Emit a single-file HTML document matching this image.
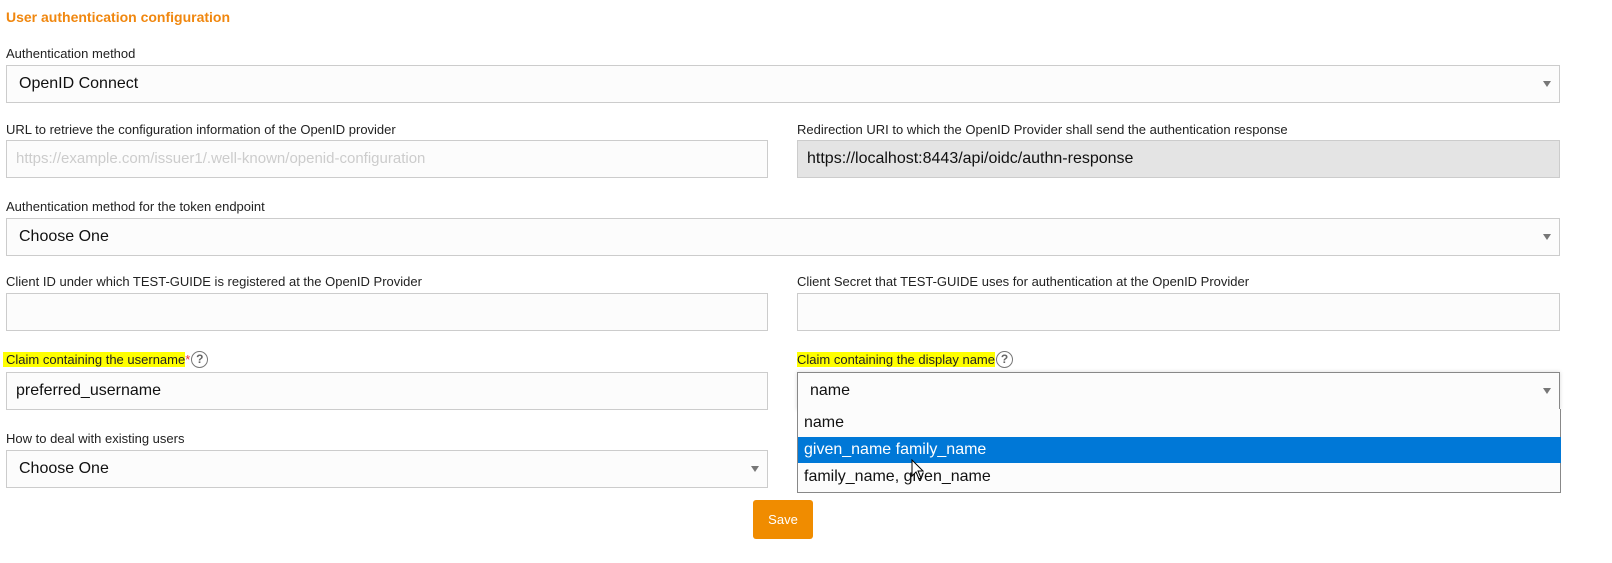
<!DOCTYPE html>
<html><head><meta charset="utf-8"><style>
*{box-sizing:border-box;margin:0;padding:0}
body{width:1612px;height:563px;background:#fff;font-family:"Liberation Sans",Arial,sans-serif;position:relative;overflow:hidden;color:#222}
.t{position:absolute;left:6px;top:9px;font-size:14px;font-weight:bold;color:#f0870f}
.l{position:absolute;font-size:13px;color:#222;white-space:nowrap;line-height:15px}
.b{position:absolute;border:1px solid #ccc;background:#fcfcfc;font-size:16px;padding-left:12px;line-height:36px;color:#111}
.arr{position:absolute;right:8px;top:15px;width:0;height:0;border-left:4px solid transparent;border-right:4px solid transparent;border-top:6px solid #777}
.hl{background:#ffff00;display:inline-block;line-height:15px;vertical-align:top}
.q{display:inline-block;width:17px;height:17px;border:1.5px solid #777;border-radius:50%;font-size:12px;font-weight:bold;color:#666;text-align:center;line-height:14px;vertical-align:top;margin-top:-1px;margin-left:1px}
.it{position:absolute;left:798px;width:763px;font-size:16px;padding-left:6px;line-height:26px;color:#111}
</style></head><body>
<div class="t">User authentication configuration</div>

<div class="l" style="left:6px;top:46px">Authentication method</div>
<div class="b" style="left:6px;top:65px;width:1554px;height:38px">OpenID Connect<span class="arr"></span></div>

<div class="l" style="left:6px;top:122px">URL to retrieve the configuration information of the OpenID provider</div>
<div class="b" style="left:6px;top:140px;width:762px;height:38px;color:#ccc;font-size:15px;padding-left:9px">https://example.com/issuer1/.well-known/openid-configuration</div>
<div class="l" style="left:797px;top:122px">Redirection URI to which the OpenID Provider shall send the authentication response</div>
<div class="b" style="left:797px;top:140px;width:763px;height:38px;background:#e4e4e4;padding-left:9px">https://localhost:8443/api/oidc/authn-response</div>

<div class="l" style="left:6px;top:199px">Authentication method for the token endpoint</div>
<div class="b" style="left:6px;top:218px;width:1554px;height:38px">Choose One<span class="arr"></span></div>

<div class="l" style="left:6px;top:274px">Client ID under which TEST-GUIDE is registered at the OpenID Provider</div>
<div class="b" style="left:6px;top:293px;width:762px;height:38px"></div>
<div class="l" style="left:797px;top:274px">Client Secret that TEST-GUIDE uses for authentication at the OpenID Provider</div>
<div class="b" style="left:797px;top:293px;width:763px;height:38px"></div>

<div class="l" style="left:3px;top:352px"><span class="hl" style="padding:0 0 0 3px">Claim containing the username</span><span style="color:#e33;vertical-align:top">*</span><span class="q">?</span></div>
<div class="b" style="left:6px;top:372px;width:762px;height:38px;padding-left:9px">preferred_username</div>
<div class="l" style="left:797px;top:352px"><span class="hl">Claim containing the display name</span><span class="q">?</span></div>
<div class="b" style="left:797px;top:372px;width:763px;height:38px;border-color:#888;padding-left:12px;box-shadow:0 0 4px rgba(0,0,0,.15)">name<span class="arr"></span></div>

<div style="position:absolute;left:797px;top:409px;width:764px;height:84px;border:1px solid #888;border-top:none;background:#fcfcfc"></div>
<div class="it" style="top:410px">name</div>
<div class="it" style="top:437px;background:#0078d7;color:#fff">given_name family_name</div>
<div class="it" style="top:464px">family_name, given_name</div>
<svg style="position:absolute;left:911px;top:459px" width="14" height="22" viewBox="0 0 14 22"><path d="M1 1 L1 17 L5 13 L8 20 L10 19 L7 12 L12 12 Z" fill="#fff" stroke="#000" stroke-width="1"/></svg>

<div class="l" style="left:6px;top:431px">How to deal with existing users</div>
<div class="b" style="left:6px;top:450px;width:762px;height:38px">Choose One<span class="arr"></span></div>

<div style="position:absolute;left:753px;top:500px;width:60px;height:39px;background:#f08c00;border-radius:3px;color:#fff;font-size:13px;text-align:center;line-height:39px">Save</div>
</body></html>
